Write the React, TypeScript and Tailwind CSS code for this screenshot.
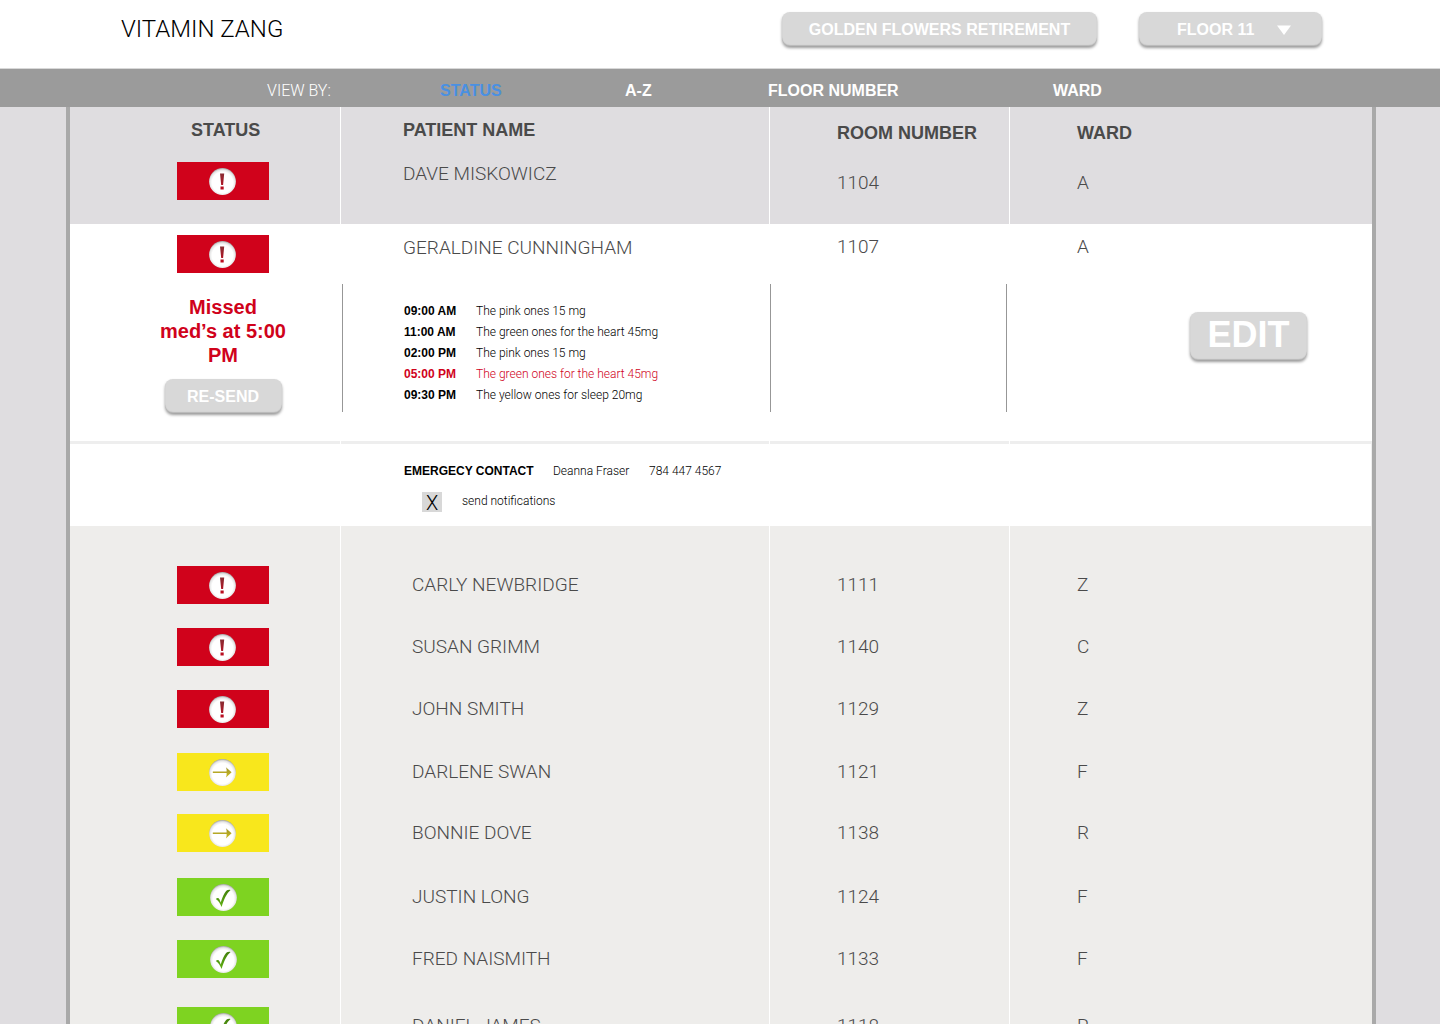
import { useState } from "react";

type Status = "alert" | "pending" | "ok";

interface Patient {
  name: string;
  room: string;
  ward: string;
  status: Status;
  height: string;
}

const patients: Patient[] = [
  { name: "CARLY NEWBRIDGE", room: "1111", ward: "Z", status: "alert", height: "h-[62px]" },
  { name: "SUSAN GRIMM", room: "1140", ward: "C", status: "alert", height: "h-[62px]" },
  { name: "JOHN SMITH", room: "1129", ward: "Z", status: "alert", height: "h-[63px]" },
  { name: "DARLENE SWAN", room: "1121", ward: "F", status: "pending", height: "h-[61px]" },
  { name: "BONNIE DOVE", room: "1138", ward: "R", status: "pending", height: "h-[64px]" },
  { name: "JUSTIN LONG", room: "1124", ward: "F", status: "ok", height: "h-[62px]" },
  { name: "FRED NAISMITH", room: "1133", ward: "F", status: "ok", height: "h-[67px]" },
  { name: "DANIEL JAMES", room: "1118", ward: "R", status: "ok", height: "h-[62px]" },
];

const meds = [
  { time: "09:00 AM", text: "The pink ones 15 mg", missed: false },
  { time: "11:00 AM", text: "The green ones for the heart 45mg", missed: false },
  { time: "02:00 PM", text: "The pink ones 15 mg", missed: false },
  { time: "05:00 PM", text: "The green ones for the heart 45mg", missed: true },
  { time: "09:30 PM", text: "The yellow ones for sleep 20mg", missed: false },
];

const tabs = ["STATUS", "A-Z", "FLOOR NUMBER", "WARD"];

const statusColor: Record<Status, string> = {
  alert: "bg-[#d0021b]",
  pending: "bg-[#f8e71c]",
  ok: "bg-[#7ed321]",
};

const statusLabel: Record<Status, string> = {
  alert: "Alert",
  pending: "Pending",
  ok: "OK",
};

const ink: Record<Status, [string, string]> = {
  alert: ["#8a2c33", "#c00a1e"],
  pending: ["#93892a", "#dccb1e"],
  ok: ["#43800d", "#5fae12"],
};

const light = "font-['Roboto',sans-serif] font-light";
const raised =
  "rounded-[8px] bg-[#d8d8d8] font-bold text-white shadow-[0_2px_3px_rgba(0,0,0,0.4),inset_0_-1px_1px_rgba(0,0,0,0.15)]";

function StatusIcon({ status }: { status: Status }) {
  const cx = status === "ok" ? 14.5 : 13.5;
  return (
    <svg viewBox="0 0 28 28" className="size-7" aria-hidden="true">
      <defs>
        <radialGradient id={`disc-${status}`} gradientUnits="userSpaceOnUse" cx={cx} cy="15.5" r="14.5">
          <stop offset="0.72" stopColor="#ffffff" />
          <stop offset="0.88" stopColor="#e4e4e4" />
          <stop offset="1" stopColor="#a0a0a0" />
        </radialGradient>
        <linearGradient id={`ink-${status}`} gradientUnits="userSpaceOnUse" x1="0" y1="7" x2="0" y2="23">
          <stop offset="0" stopColor={ink[status][0]} />
          <stop offset="1" stopColor={ink[status][1]} />
        </linearGradient>
      </defs>
      <circle cx={cx} cy="14.5" r="13.4" fill={`url(#disc-${status})`} />
      {status === "alert" && (
        <path d="M11 6.500h4.200l-1.100 11.500h-1.900zM11.500 19.500h3.200v3h-3.200z" fill={`url(#ink-${status})`} />
      )}
      {status === "pending" && (
        <path
          d="M3.800 13.500H17.600C17.800 12.100 17.500 10.500 16.900 9.200L22.600 14.200L16.900 19.400C17.500 18 17.800 16.400 17.600 15H3.800Z"
          fill={`url(#ink-${status})`}
        />
      )}
      {status === "ok" && (
        <path
          d="M6.800 16C8.200 14.700 9.600 14.800 10.400 16.200C10.900 17.100 11.300 18.200 11.700 19.400C13.200 14.800 15 10.400 17.300 7.800C18.400 6.800 19.900 6.600 21.600 6.900C17.400 10.400 14.900 16.400 12.600 24C11 20.800 9.600 17.500 6.800 16Z"
          fill={`url(#ink-${status})`}
        />
      )}
    </svg>
  );
}

function StatusBadge({ status }: { status: Status }) {
  return (
    <div
      role="img"
      aria-label={statusLabel[status]}
      className={`ml-[107px] flex h-[38px] w-[92px] items-center justify-center ${statusColor[status]}`}
    >
      <StatusIcon status={status} />
    </div>
  );
}

export default function App() {
  const [active, setActive] = useState("STATUS");
  const [notify, setNotify] = useState(true);

  return (
    <div className="flex h-screen flex-col overflow-y-auto bg-[#dfdde0] font-['Liberation_Sans',Arial,sans-serif] text-[#4a4a4a] [scrollbar-width:none]">
      <header className="flex h-[69px] shrink-0 items-start justify-between border-b border-[#d8d8d8] bg-white pt-3 pr-[118px] pl-[121px]">
        <h1 className={`${light} text-2xl leading-[34px] text-black`}>VITAMIN ZANG</h1>
        <div className="flex gap-[42px]">
          <button type="button" className={`${raised} h-[34px] w-[315px] pt-0.5 text-base`}>
            GOLDEN FLOWERS RETIREMENT
          </button>
          <div className="relative">
            <select
              aria-label="Floor"
              className={`${raised} h-[34px] w-[183px] appearance-none pt-0.5 pl-[38px] text-base outline-none`}
            >
              <option>FLOOR 11</option>
            </select>
            <svg viewBox="0 0 14 10" className="pointer-events-none absolute top-[13px] right-[31px] h-[10px] w-[14px]" aria-hidden="true">
              <path d="M0 .5h14L7 10z" fill="#fff" />
            </svg>
          </div>
        </div>
      </header>

      <nav className="flex h-[38px] shrink-0 items-center bg-[#9b9b9b] pt-1.5 pl-[267px] text-base font-bold text-white">
        <span className={`${light} w-[173px] text-base`}>VIEW BY:</span>
        <div className="grid grid-cols-[185px_143px_285px_auto]">
          {tabs.map((tab) => (
            <button
              key={tab}
              type="button"
              onClick={() => setActive(tab)}
              className={`text-left ${tab === active ? "text-[#4a90e2]" : "text-white"}`}
            >
              {tab}
            </button>
          ))}
        </div>
      </nav>

      <main className="mr-16 ml-[66px] grow border-x-4 border-[#a9a9a9] bg-[#eeedeb]">
        <table className="w-full table-fixed border-separate border-spacing-0 text-left align-top">
          <colgroup>
            <col className="w-[271px]" />
            <col className="w-[429px]" />
            <col className="w-[240px]" />
            <col />
          </colgroup>
          <thead className="bg-[#dfdde0] text-lg leading-6">
            <tr className="h-[55px] align-top">
              <th scope="col" className="border-r border-white pt-[11px] pl-[121px]">STATUS</th>
              <th scope="col" className="border-r border-white pt-[11px] pl-[62px]">PATIENT NAME</th>
              <th scope="col" className="border-r border-white pt-[14px] pl-[67px]">ROOM NUMBER</th>
              <th scope="col" className="pt-[14px] pl-[67px]">WARD</th>
            </tr>
          </thead>
          <tbody className={`${light} text-[19px] leading-9`}>
            <tr className="h-[62px] bg-[#dfdde0] align-top">
              <td className="border-r border-white"><StatusBadge status="alert" /></td>
              <td className="border-r border-white pl-[62px] leading-6">DAVE MISKOWICZ</td>
              <td className="border-r border-white pt-[3px] pl-[67px]">1104</td>
              <td className="pt-[3px] pl-[67px]">A</td>
            </tr>
            <tr className="h-[60px] bg-white align-top">
              <td className="pt-[11px]"><StatusBadge status="alert" /></td>
              <td className="pt-[6px] pl-[62px]">GERALDINE CUNNINGHAM</td>
              <td className="pt-[5px] pl-[67px]">1107</td>
              <td className="pt-[5px] pl-[67px]">A</td>
            </tr>
            <tr className="h-[157px] bg-white align-top">
              <td className="pt-[11px] pl-[73px]">
                <div className="flex w-[160px] flex-col items-center font-['Liberation_Sans',Arial,sans-serif] font-bold">
                  <p className="w-32 text-center text-xl leading-6 text-[#d0021b]">
                    Missed med’s at 5:00 PM
                  </p>
                  <button type="button" className={`${raised} mt-3 h-[34px] w-[117px] pt-0.5 text-base`}>
                    RE-SEND
                  </button>
                </div>
              </td>
              <td className="pl-px">
                <ul className="h-32 border-l border-[#979797] pt-[17px] pl-[61px] text-xs leading-[21px] text-black">
                  {meds.map((med) => (
                    <li key={med.time} className={`flex ${med.missed ? "text-[#d0021b]" : ""}`}>
                      <span className="w-[72px] font-['Liberation_Sans',Arial,sans-serif] font-bold">{med.time}</span>
                      <span>{med.text}</span>
                    </li>
                  ))}
                </ul>
              </td>
              <td className="pr-[3px]"><div className="h-32 border-x border-[#979797]" /></td>
              <td className="pt-7 pr-[65px] text-right">
                <button
                  type="button"
                  className={`${raised} ml-auto block h-12 w-[117px] pb-0.5 text-center font-['Liberation_Sans',Arial,sans-serif] text-4xl leading-[44px]`}
                >
                  EDIT
                </button>
              </td>
            </tr>
            <tr className="h-[3px] bg-[#eeeeee]">
              <td className="border-r border-white" />
              <td className="border-r border-white" />
              <td className="border-r border-white" />
              <td />
            </tr>
            <tr className="h-[82px] bg-white align-top text-xs leading-[18px] text-black">
              <td />
              <td colSpan={3} className="border-r border-[#eeeeee] pt-[18px] pl-[63px]">
                <p className="flex">
                  <span className="w-[149px] font-['Liberation_Sans',Arial,sans-serif] font-bold">EMERGECY CONTACT</span>
                  <span className="w-24">Deanna Fraser</span>
                  <span>784 447 4567</span>
                </p>
                <label className="mt-3 ml-[18px] flex items-start gap-5">
                  <span className="relative size-5">
                    <input
                      type="checkbox"
                      checked={notify}
                      onChange={(e) => setNotify(e.target.checked)}
                      className="block size-5 appearance-none bg-[#d8d8d8]"
                    />
                    {notify && (
                      <span aria-hidden="true" className="pointer-events-none absolute inset-0 text-center text-xl leading-[22px]">
                        X
                      </span>
                    )}
                  </span>
                  send notifications
                </label>
              </td>
            </tr>
            <tr className="h-10" aria-hidden="true">
              <td className="border-r border-white" />
              <td className="border-r border-white" />
              <td className="border-r border-white" />
              <td />
            </tr>
            {patients.map((p) => (
              <tr key={p.name} className={`${p.height} align-top leading-[38px]`}>
                <td className="border-r border-white"><StatusBadge status={p.status} /></td>
                <td className="border-r border-white pl-[71px]">{p.name}</td>
                <td className="border-r border-white pl-[67px]">{p.room}</td>
                <td className="pl-[67px]">{p.ward}</td>
              </tr>
            ))}
          </tbody>
        </table>
      </main>
    </div>
  );
}
